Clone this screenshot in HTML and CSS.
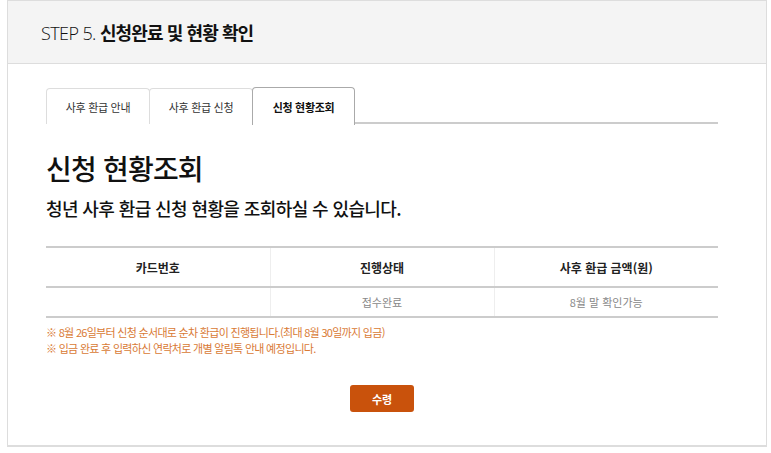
FILE: index.html
```html
<!DOCTYPE html>
<html lang="ko">
<head>
  <meta charset="UTF-8" />
  <title>STEP 5. 신청완료 및 현황 확인</title>
  <link rel="stylesheet" href="styles.css">
</head>
<body>
  <div class="step-box">
    <div class="step-header">
      <h2><span class="step-num">STEP 5.</span> 신청완료 및 현황 확인</h2>
    </div>

    <div class="step-body">
      <div class="tabs">
        <div class="tab">사후 환급 안내</div>
        <div class="tab">사후 환급 신청</div>
        <div class="tab active">신청 현황조회</div>
      </div>

      <h3 class="title">신청 현황조회</h3>
      <p class="subtitle">청년 사후 환급 신청 현황을 조회하실 수 있습니다.</p>

      <table class="status-table">
        <thead>
          <tr>
            <th>카드번호</th>
            <th>진행상태</th>
            <th>사후 환급 금액(원)</th>
          </tr>
        </thead>
        <tbody>
          <tr>
            <td></td>
            <td>접수완료</td>
            <td>8월 말 확인가능</td>
          </tr>
        </tbody>
      </table>

      <ul class="notes">
        <li>※ 8월 26일부터 신청 순서대로 순차 환급이 진행됩니다.(최대 8월 30일까지 입금)</li>
        <li>※ 입금 완료 후 입력하신 연락처로 개별 알림톡 안내 예정입니다.</li>
      </ul>

      <div class="btn-wrap">
        <button class="btn-receive">수령</button>
      </div>
    </div>
  </div>
</body>
</html>
```

FILE: styles.css
```css
/* Base */
* {
  box-sizing: border-box;
  margin: 0;
  padding: 0;
}

body {
  font-family: 'Noto Sans CJK KR', 'Noto Sans', sans-serif;
  background: #fff;
  color: #111;
  width: 771px;
}

.step-box {
  margin-left: 7px;
  width: 760px;
  border: 1px solid #ddd;
  border-bottom-width: 2px;
}

/* Header */
.step-header {
  height: 63px;
  background-color: #f4f4f4;
  border-bottom: 1px solid #ddd;
  padding-left: 33px;
  display: flex;
  align-items: center;
}

.step-header h2 {
  font-size: 18px;
  font-weight: 700;
  letter-spacing: -0.9px;
  color: #111;
}

.step-num {
  font-family: 'Open Sans', 'Noto Sans', sans-serif;
  font-weight: 300;
  letter-spacing: -0.6px;
}

/* Body */
.step-body {
  padding: 24px 48px 33px 38px;
}

/* Tabs */
.tabs {
  display: flex;
  border-bottom: 2px solid #ccc;
  height: 36px;
}

.tab {
  width: 104px;
  height: 36px;
  border: 1px solid #ddd;
  border-bottom: none;
  border-radius: 4px 4px 0 0;
  background-color: #fff;
  font-size: 11px;
  color: #333;
  display: flex;
  align-items: center;
  justify-content: center;
  letter-spacing: -0.3px;
}

.tab + .tab {
  margin-left: -1px;
}

.tab.active {
  width: 103px;
  height: 38px;
  margin-top: -1px;
  border-color: #aaa;
  font-weight: 700;
  color: #111;
  position: relative;
  z-index: 1;
}

/* Title */
.title {
  margin-top: 26px;
  font-size: 28px;
  font-weight: 500;
  letter-spacing: -0.8px;
  line-height: 36px;
}

.subtitle {
  margin-top: 9px;
  font-size: 18px;
  font-weight: 500;
  letter-spacing: -0.6px;
  line-height: 26px;
}

/* Table */
.status-table {
  width: 100%;
  margin-top: 25px;
  border-collapse: collapse;
  border-top: 2px solid #ccc;
  border-bottom: 2px solid #ccc;
  table-layout: fixed;
}

.status-table th,
.status-table td {
  text-align: center;
  border-left: 1px solid #eee;
}

.status-table th:first-child,
.status-table td:first-child {
  border-left: none;
}

.status-table th {
  height: 40px;
  font-size: 12px;
  font-weight: 700;
  color: #222;
  border-bottom: 2px solid #ccc;
}

.status-table td {
  height: 30px;
  font-size: 11px;
  color: #888;
}

/* Notes */
.notes {
  list-style: none;
  margin-top: 6px;
}

.notes li {
  font-size: 11px;
  line-height: 16px;
  color: #d97a35;
  letter-spacing: -0.7px;
}

/* Button */
.btn-wrap {
  margin-top: 29px;
  display: flex;
  justify-content: center;
}

.btn-receive {
  width: 64px;
  height: 27px;
  background-color: #c9520c;
  color: #fff;
  border: none;
  border-radius: 3px;
  font-family: inherit;
  font-size: 11px;
  font-weight: 700;
}
```
